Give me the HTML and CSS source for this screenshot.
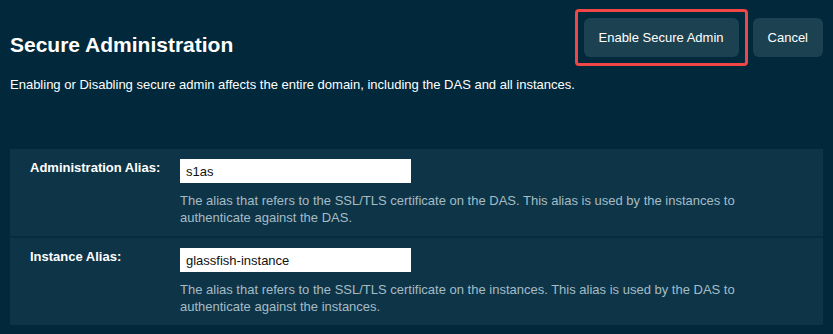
FILE: index.html
```html
<!DOCTYPE html>
<html lang="en">
<head>
    <meta charset="UTF-8">
    <meta name="viewport" content="width=device-width, initial-scale=1.0">
    <title>Secure Administration</title>
    <link rel="stylesheet" href="styles.css">
</head>
<body>
    <div class="page">
        <div class="page-header">
            <h1>Secure Administration</h1>
            <div class="header-actions">
                <button type="button" class="btn highlighted">Enable Secure Admin</button>
                <button type="button" class="btn">Cancel</button>
            </div>
        </div>
        <p class="page-help">Enabling or Disabling secure admin affects the entire domain, including the DAS and all instances.</p>

        <div class="prop-sheet">
            <div class="prop-row">
                <label for="adminAlias">Administration Alias:</label>
                <div class="prop-field">
                    <input type="text" id="adminAlias" value="s1as">
                    <p class="prop-help">The alias that refers to the SSL/TLS certificate on the DAS. This alias is used by the instances to authenticate against the DAS.</p>
                </div>
            </div>
            <div class="prop-row">
                <label for="instanceAlias">Instance Alias:</label>
                <div class="prop-field">
                    <input type="text" id="instanceAlias" value="glassfish-instance">
                    <p class="prop-help">The alias that refers to the SSL/TLS certificate on the instances. This alias is used by the DAS to authenticate against the instances.</p>
                </div>
            </div>
        </div>
    </div>
</body>
</html>
```

FILE: styles.css
```css
:root {
    --page-bg: #02293b;
    --sheet-bg: #0e3547;
    --sheet-divider: #072c3d;
    --btn-bg: #1c4150;
    --highlight: #f04646;
    --text-light: #ffffff;
    --text-muted: #a5bcc6;
    --font-family: 'Liberation Sans', Arial, sans-serif;
}
*, *::before, *::after { box-sizing: border-box; }
body { margin: 0; font-family: var(--font-family); background-color: var(--page-bg); color: var(--text-light); font-size: 13px; }
.page { padding: 18px 10px 9px; }
.page-header { display: flex; justify-content: space-between; align-items: flex-start; }
.page-header h1 { margin: 15px 0 0; font-size: 21px; line-height: 24px; font-weight: 700; }
.header-actions { display: flex; gap: 14px; }
.btn {
    padding: 12px 15px; border: none; border-radius: 6px; background-color: var(--btn-bg);
    color: var(--text-light); font-family: inherit; font-size: 13px; line-height: 15px; cursor: pointer;
}
.btn.highlighted { position: relative; }
.btn.highlighted::after {
    content: ''; position: absolute; top: -9px; right: -9px; bottom: -9px; left: -9px;
    border: 3px solid var(--highlight); border-radius: 4px; pointer-events: none;
}
.page-help { margin: 20px 0 57px; line-height: 15px; }
.prop-sheet { background-color: var(--sheet-bg); }
.prop-row { display: grid; grid-template-columns: 150px 1fr; padding: 10px 20px 10px; }
.prop-row + .prop-row { border-top: 2px solid var(--sheet-divider); }
.prop-row label { font-weight: 700; padding-top: 1px; line-height: 15px; }
.prop-field input {
    display: block; width: 231px; height: 24px; padding: 0 6px; border: none;
    font-family: inherit; font-size: 13px; color: #111;
}
.prop-help { margin: 9px 0 0; max-width: 580px; color: var(--text-muted); line-height: 17px; }
```
